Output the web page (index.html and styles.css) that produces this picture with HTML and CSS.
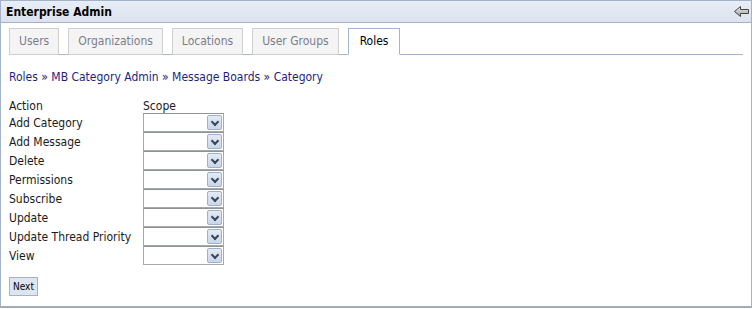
FILE: index.html
```html
<!DOCTYPE html>
<html lang="en">
<head>
    <meta charset="UTF-8">
    <title>Enterprise Admin</title>
    <link rel="stylesheet" href="styles.css">
</head>
<body>
    <div class="portlet">
        <div class="portlet-title">
            <span class="title-text">Enterprise Admin</span>
            <a class="back-icon" href="#" title="Back">
                <svg width="15" height="11" viewBox="0 0 15 11">
                    <defs>
                        <linearGradient id="arrowFill" x1="0" y1="0" x2="0" y2="1">
                            <stop offset="0" stop-color="#f2f2f2"/>
                            <stop offset="1" stop-color="#9a9a9a"/>
                        </linearGradient>
                    </defs>
                    <polygon points="0.5,5.5 6.5,0.5 6.5,3.5 14.5,3.5 14.5,7.5 6.5,7.5 6.5,10.5" fill="url(#arrowFill)" stroke="#444" stroke-width="1"/>
                </svg>
            </a>
        </div>

        <div class="portlet-body">
            <!-- Tabs -->
            <ul class="tabs">
                <li class="tab"><a href="#">Users</a></li>
                <li class="tab"><a href="#">Organizations</a></li>
                <li class="tab"><a href="#">Locations</a></li>
                <li class="tab"><a href="#">User Groups</a></li>
                <li class="tab current"><a href="#">Roles</a></li>
            </ul>

            <div class="breadcrumbs">
                <a href="#">Roles</a> &raquo; <a href="#">MB Category Admin</a> &raquo; <a href="#">Message Boards</a> &raquo; <a href="#">Category</a>
            </div>

            <!-- Permissions -->
            <table class="perms">
                <tr>
                    <th>Action</th>
                    <th>Scope</th>
                </tr>
                <tr><td>Add Category</td><td><div class="scope-select"><span class="drop"></span></div></td></tr>
                <tr><td>Add Message</td><td><div class="scope-select"><span class="drop"></span></div></td></tr>
                <tr><td>Delete</td><td><div class="scope-select"><span class="drop"></span></div></td></tr>
                <tr><td>Permissions</td><td><div class="scope-select"><span class="drop"></span></div></td></tr>
                <tr><td>Subscribe</td><td><div class="scope-select"><span class="drop"></span></div></td></tr>
                <tr><td>Update</td><td><div class="scope-select"><span class="drop"></span></div></td></tr>
                <tr><td>Update Thread Priority</td><td><div class="scope-select"><span class="drop"></span></div></td></tr>
                <tr><td>View</td><td><div class="scope-select"><span class="drop"></span></div></td></tr>
            </table>

            <button class="button" type="button">Next</button>
        </div>
    </div>
</body>
</html>
```

FILE: styles.css
```css
* {
    margin: 0;
    padding: 0;
    box-sizing: border-box;
}

body {
    font-family: 'DejaVu Sans Condensed', 'DejaVu Sans', Verdana, sans-serif;
    font-size: 11px;
    color: #1a1a1a;
    background: #ffffff;
}

.portlet {
    width: 752px;
    height: 308px;
    border: 1px solid #a3b2c8;
    border-bottom: 2px solid #a0aab8;
    background: #ffffff;
}

.portlet-title {
    height: 22px;
    display: flex;
    align-items: center;
    justify-content: space-between;
    padding: 0 2px 0 5px;
    background: linear-gradient(#e9eef6 0%, #dbe3ef 100%);
    border-bottom: 1px solid #a3b2c8;
}

.title-text {
    font-weight: bold;
    font-size: 12px;
    color: #000000;
}

.back-icon {
    display: flex;
    margin-top: -1px;
}

.portlet-body {
    padding: 5px 8px 0 8px;
}

.tabs {
    list-style: none;
    display: flex;
    gap: 9px;
    height: 27px;
    border-bottom: 1px solid #a3b5cf;
}

.tab {
    height: 27px;
    border: 1px solid #cfcfcf;
    background: #f4f4f4;
}

.tab a {
    display: block;
    height: 100%;
    padding: 0 9px;
    line-height: 25px;
    font-size: 12px;
    color: #7c7c8c;
    text-decoration: none;
}

.tab.current {
    background: #ffffff;
    border-color: #a3b5cf;
    border-bottom: 1px solid #ffffff;
}

.tab.current a {
    padding: 0 11px;
    color: #000000;
}

.breadcrumbs {
    margin-top: 15px;
    font-size: 12px;
    color: #1a1a6e;
}

.breadcrumbs a {
    color: #1f1f7a;
    text-decoration: none;
}

.perms {
    margin-top: 14px;
    border-collapse: collapse;
    font-size: 12px;
}

.perms th {
    font-weight: normal;
    text-align: left;
    height: 15px;
    padding-top: 1px;
    line-height: 14px;
    vertical-align: top;
}

.perms td {
    height: 19px;
    padding: 0;
    vertical-align: middle;
}

.perms td:first-child,
.perms th:first-child {
    width: 134px;
}

.scope-select {
    position: relative;
    width: 81px;
    height: 19px;
    border: 1px solid #a5a9ae;
    border-top-color: #8f9398;
    background: #ffffff;
}

.drop {
    position: absolute;
    top: 1px;
    right: 1px;
    width: 15px;
    height: 15px;
    border: 1px solid #9fb0c9;
    border-radius: 2px;
    background: linear-gradient(#e3ebf6 0%, #c9d7ea 100%);
}

.drop::after {
    content: '';
    position: absolute;
    left: 4px;
    top: 3px;
    width: 4px;
    height: 4px;
    border-right: 2px solid #3c4656;
    border-bottom: 2px solid #3c4656;
    transform: rotate(45deg);
}

.button {
    display: block;
    margin-top: 12px;
    height: 19px;
    padding: 0 3px;
    font-family: 'DejaVu Sans Condensed', 'DejaVu Sans', Verdana, sans-serif;
    font-size: 10px;
    color: #000000;
    background: #dde5f0;
    border: 1px solid #a3b2c8;
    cursor: pointer;
}
```
